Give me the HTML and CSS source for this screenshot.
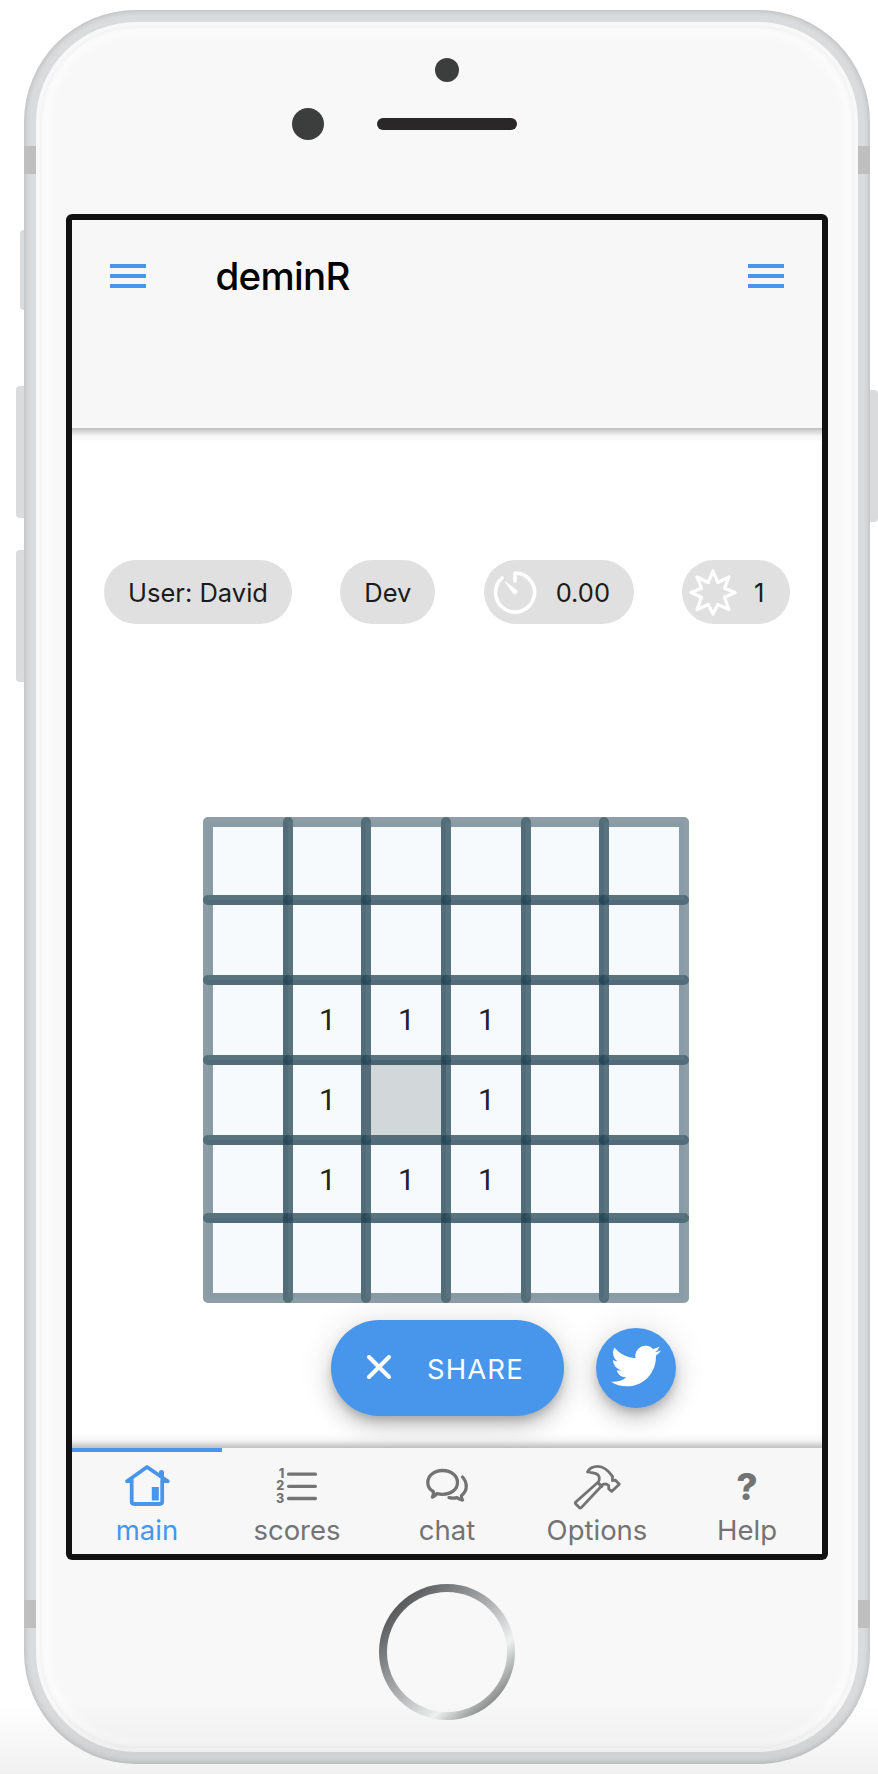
FILE: index.html
```html
<!DOCTYPE html>
<html lang="en">
<head>
<meta charset="utf-8">
<title>deminR</title>
<link rel="stylesheet" href="styles.css">
</head>
<body>
<main class="device">
  <i class="bar bar-top"></i><i class="bar bar-bottom"></i>
  <i class="side mute"></i><i class="side vol-up"></i><i class="side vol-down"></i><i class="side sleep"></i>
  <div class="face"></div><div class="gloss"></div>
  <i class="sensor"></i><i class="camera"></i><i class="speaker"></i><i class="home"></i>
  <div class="screen">
    <header class="navbar">
      <svg class="menu" viewBox="0 0 36 24"><path d="M0 0h36v4H0zM0 10h36v4H0zM0 20h36v4H0z"/></svg>
      <h1 class="title">deminR</h1>
      <svg class="menu" viewBox="0 0 36 24"><path d="M0 0h36v4H0zM0 10h36v4H0zM0 20h36v4H0z"/></svg>
    </header>
    <section class="content">
      <div class="chips">
        <span class="chip chip-user">User: David</span>
        <span class="chip chip-level">Dev</span>
        <span class="chip chip-time"><svg width="44" height="44" viewBox="0 0 44 44"><path d="M22 11V3a19.5 19.5 0 1 1-13 5" fill="none" stroke="#fff" stroke-width="3.6" stroke-linecap="round" stroke-linejoin="round"/><path d="M12.4 11.8 23.8 20.6a2.3 2.3 0 0 1-3 3.2Z" fill="#fff" stroke="#fff" stroke-linejoin="round"/></svg><b>0.00</b></span>
        <span class="chip chip-mines"><svg width="48" height="48" viewBox="0 0 48 48"><path d="m24 3 4.800 11.500 11.200-5.500-4.500 11.200L46 24.500l-10.500 4.800L40 41.500l-11.200-5L24 46l-4.800-9.500-11.200 5 4.500-12.200L2 24.500l10.500-4.300L8 9l11.200 5.500Z" fill="none" stroke="#fff" stroke-width="3.200" stroke-linejoin="round"/></svg><b>1</b></span>
      </div>
      <svg class="board" viewBox="203 817 486 486" role="img" aria-label="Minefield"><g id="cells"></g></svg>
      <div class="actions">
        <div class="share"><svg width="24" height="24" viewBox="0 0 24 24"><path d="m2 2 20 20M22 2 2 22" stroke="#fff" stroke-width="4" stroke-linecap="round"/></svg><span>SHARE</span></div>
        <div class="twitter"><svg width="50" height="50" viewBox="0 0 24 24"><path fill="#fff" d="M23.953 4.570a10 10 0 0 1-2.825.775 4.958 4.958 0 0 0 2.163-2.723c-.951.555-2.005.959-3.127 1.184a4.920 4.920 0 0 0-8.384 4.482C7.690 8.095 4.067 6.130 1.640 3.162a4.822 4.822 0 0 0-.666 2.475c0 1.710.870 3.213 2.188 4.096a4.904 4.904 0 0 1-2.228-.616v.060a4.923 4.923 0 0 0 3.946 4.827 4.996 4.996 0 0 1-2.212.085 4.936 4.936 0 0 0 4.604 3.417 9.867 9.867 0 0 1-6.102 2.105c-.390 0-.779-.023-1.170-.067a13.995 13.995 0 0 0 7.557 2.209c9.053 0 13.998-7.496 13.998-13.985 0-.210 0-.420-.015-.630A9.935 9.935 0 0 0 24 4.590z"/></svg></div>
      </div>
    </section>
    <nav class="tabs">
      <a class="tab active"><svg viewBox="0 0 52 52"><g fill="none" stroke="currentColor" stroke-width="3.800" stroke-linejoin="round" stroke-linecap="round"><path d="M6 21.200 26 7l20.800 14.200"/><path d="M10.700 20v21.500q0 2.500 2.500 2.500h25.500q2.500 0 2.500-2.500V20"/></g><path d="M38 12q0-2 2.500-2t2.500 2v9l-5-4zM30.800 27h7v13.500h-7zM6 19.500h6v3.600H6zM40 19.500h7v3.600h-7z" fill="currentColor"/></svg><span>main</span></a>
      <a class="tab"><svg viewBox="0 0 52 52"><path d="M17.600 14.200h26.800M17.600 26.300h26.800M17.600 38.500h26.800" stroke="currentColor" stroke-width="3.300" stroke-linecap="round"/><g class="nums"><text x="13.200" y="18.100">1</text><text x="13.200" y="30.300">2</text><text x="13.200" y="42.500">3</text></g></svg><span>scores</span></a>
      <a class="tab"><svg viewBox="0 0 52 52"><g fill="none" stroke="currentColor" stroke-width="3.300" stroke-linecap="round" stroke-linejoin="round"><path d="M21.700 10.500c8.600 0 14.800 5.200 14.800 11.900s-6.200 11.900-14.800 11.900c-2 0-4-.300-5.800-.800-1.100 1.600-2.700 2.900-4.500 3.600 1-1.500 1.300-3.600.9-5.600C8.700 29.400 6.800 26.200 6.800 22.400c0-6.700 6.200-11.900 14.900-11.900Z"/><path d="M41.500 17c5 5.500 5.300 13.800-1 18.500-.300 1.300 0 3.200 1 4.500-2-.300-4-1-5.300-2.300-2.500.6-5.500.6-8.200 0"/></g></svg><span>chat</span></a>
      <a class="tab"><svg viewBox="0 0 52 52"><g fill="none" stroke="currentColor" stroke-width="2.800" stroke-linecap="round" stroke-linejoin="round"><path d="M16.500 12c2-4 6-5.600 10.500-5.600 6 0 10 3.800 14.500 10v4.300l3-.500 3.800 4-7.600 7.200-3-2.400v-3.400c-2.400-2.400-4.700-2.300-8 .2L27 22.600c2.400-4 1.500-7.500-2-9-2.500-1-5-.8-8.500-1.600Z"/><path d="M27 22.300 4.800 42q-1 1 0 2l3.500 3.600q1 1 2 0L31 25.500M27 22.500l4 4"/></g></svg><span>Options</span></a>
      <a class="tab"><b class="question">?</b><span>Help</span></a>
    </nav>
  </div>
</main>
<div class="fade"></div>
<script src="board.js"></script>
</body>
</html>
```
FILE: styles.css
```css
* { box-sizing: border-box; }
html, body { margin: 0; background: #fff; }
body { width: 878px; height: 1774px; overflow: hidden; position: relative; padding: 10px 0 0 24px; font-family: Inter, "Liberation Sans", sans-serif; color: #1b1b1c; }
.device { position: relative; width: 846px; height: 1754px; padding: 210px 48px; border-radius: 112px; background: #d9dbdc; box-shadow: inset 0 0 6px rgba(0,0,0,.2); }
.device > i, .face, .gloss { position: absolute; }
.bar { left: 0; width: 100%; height: 28px; background: #bfbfc0; }
.bar-top { top: 136px; }
.bar-bottom { bottom: 136px; }
.side { width: 8px; left: -8px; height: 132px; background: #d9dbdc; border-radius: 4px 0 0 4px; }
.mute { width: 4px; left: -4px; top: 220px; height: 80px; }
.vol-up { top: 376px; }
.vol-down { top: 540px; }
.side.sleep { left: auto; right: -8px; top: 380px; border-radius: 0 4px 4px 0; }
.face { inset: 12px; border-radius: 100px; background: #f8f8f8; }
.gloss { inset: 16px; border-radius: 96px; box-shadow: inset 0 0 6px rgba(0,0,0,.1), inset 0 0 12px 6px #fff; }
.sensor { left: 411px; top: 48px; width: 24px; height: 24px; border-radius: 50%; background: #3c3d3d; }
.camera { left: 268px; top: 98px; width: 32px; height: 32px; border-radius: 50%; background: #3c3d3d; }
.speaker { left: 353px; top: 108px; width: 140px; height: 12px; border-radius: 6px; background: #292728; }
.home { left: 355px; bottom: 44px; width: 136px; height: 136px; border-radius: 50%; background: linear-gradient(135deg, #303233 0%, #b5b7b9 50%, #f0f2f2 69%, #303233 100%); }
.home::before { content: ""; position: absolute; inset: 8px; border-radius: 50%; background: #f8f8f8; }
.screen { position: relative; width: 750px; height: 1334px; background: #fff; border-radius: 2px; box-shadow: 0 0 0 6px #111; display: flex; flex-direction: column; }
.navbar { height: 208px; background: #f7f7f8; padding: 36px 38px; display: flex; align-items: flex-start; position: relative; }
.navbar::after, .tabs::before { content: ""; position: absolute; left: 0; right: 0; height: 16px; pointer-events: none; }
.navbar::after { top: 100%; background: linear-gradient(to bottom, rgba(0,0,0,.25) 0%, rgba(0,0,0,.08) 40%, rgba(0,0,0,.04) 50%, transparent 90%); }
.tabs::before { bottom: 100%; background: linear-gradient(to top, rgba(0,0,0,.25) 0%, rgba(0,0,0,.08) 40%, rgba(0,0,0,.04) 50%, transparent 90%); }
.menu { width: 36px; height: 24px; margin-top: 8px; fill: #4796ec; }
.title { margin: -1px auto 0 69.5px; font-size: 38.5px; line-height: 42px; font-weight: 500; letter-spacing: -.7px; color: #000; }
.content { height: 1020px; display: flex; flex-direction: column; }
.chips { display: flex; justify-content: space-between; margin: 132px 32px 0; }
.chip { height: 64px; border-radius: 32px; background: #e0e0e0; display: flex; align-items: center; justify-content: center; font-size: 25.5px; white-space: nowrap; }
.chip b { font-weight: 400; }
.chip-user { width: 188px; }
.chip-level { width: 95px; }
.chip-time { width: 150px; justify-content: flex-start; padding-left: 9px; gap: 19px; }
.chip-mines { width: 108px; justify-content: flex-start; padding-left: 7px; gap: 17px; }
.board { width: 486px; height: 486px; margin: 193px 0 0 131px; flex: none; display: block; }
.board text { font: 30px Roboto, "Liberation Sans", sans-serif; fill: #222; text-anchor: middle; }
.actions { display: flex; align-items: center; gap: 32px; margin: 17px 0 0 258.5px; }
.share { width: 233px; height: 96px; border-radius: 48px; padding-left: 36px; display: flex; align-items: center; gap: 36.5px; color: #fff; font-size: 27.5px; letter-spacing: 1.1px; }
.share svg { position: relative; top: -1px; }
.share span { padding-top: 1px; }
.twitter { width: 80px; height: 80px; border-radius: 50%; display: flex; align-items: center; justify-content: center; padding-bottom: 4px; }
.share, .twitter { background: #4796ec; box-shadow: 0 6px 10px -2px rgba(0,0,0,.2), 0 12px 20px rgba(0,0,0,.14), 0 2px 36px rgba(0,0,0,.12); }
.tabs { position: relative; height: 106px; background: #f7f7f8; display: flex; }
.tab { width: 150px; display: flex; flex-direction: column; align-items: center; color: #737373; font-size: 27.5px; line-height: 34px; padding-top: 12px; }
.tab.active { color: #4796ec; border-top: 4px solid #4796ec; padding-top: 8px; }
.tab svg { width: 52px; height: 52px; }
.tab span { margin-top: 1px; }
.question { height: 52px; line-height: 54px; font-size: 37px; font-weight: 800; }
.nums text { font: 800 12.5px Inter, sans-serif; fill: currentColor; text-anchor: end; }
.fade { position: absolute; left: 0; right: 0; bottom: 0; height: 74px; background: linear-gradient(to bottom, transparent, rgba(0,0,0,.055)); pointer-events: none; }
```
FILE: board.js
```javascript
const xs = [208, 288, 366, 446, 526, 604, 684];
const ys = [822, 900, 980, 1060, 1140, 1218, 1298];
const ones = ["2,1", "2,2", "2,3", "3,1", "3,3", "4,1", "4,2", "4,3"];
let out = "";
for (let c = 0; c < 6; c++) {
  for (let r = 5; r >= 0; r--) {
    const empty = r === 3 && c === 2;
    out += `<rect x="${xs[c]}" y="${ys[r]}" width="${xs[c + 1] - xs[c]}" height="${ys[r + 1] - ys[r]}" fill="${empty ? "#8e9ba3" : "#c8e0ee"}" fill-opacity="${empty ? 0.4 : 0.16}" stroke="#1b3d4e" stroke-opacity=".5" stroke-width="10" stroke-linejoin="round"/>`;
  }
}
for (const cell of ones) {
  const [r, c] = cell.split(",").map(Number);
  out += `<text x="${(xs[c] + xs[c + 1]) / 2 + 0.5}" y="${ys[r] + 50}">1</text>`;
}
document.getElementById("cells").innerHTML = out;
```
